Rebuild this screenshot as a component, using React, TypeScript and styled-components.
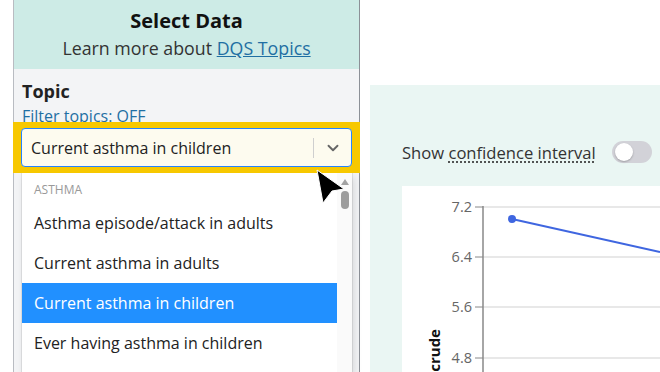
import styled, { createGlobalStyle } from "styled-components";
import { ChevronDown } from "lucide-react";

const GlobalStyle = createGlobalStyle`
    html, body {
        margin: 0;
        padding: 0;
        background: #ffffff;
        font-family: 'Open Sans', 'Noto Sans', sans-serif;
        color: #222;
    }
    * { box-sizing: border-box; }
`

const Page = styled.div`
    width: 660px;
    height: 372px;
    display: flex;
    overflow: hidden;
    position: relative;
`

const Sidebar = styled.div`
    width: 347px;
    margin-left: 13px;
    height: 100%;
    display: flex;
    flex-direction: column;
    border-left: 1px solid #b9bcc2;
    border-right: 1px solid #8c9097;
    background: #f3f4f6;
`

const Header = styled.div`
    flex-shrink: 0;
    background: #cdebe6;
    height: 69px;
    padding-top: 7px;
    text-align: center;

    .title {
        margin: 0;
        font-size: 20px;
        font-weight: 700;
        line-height: 28px;
        color: #111;
    }
    .sub {
        margin: 0;
        font-size: 17.8px;
        line-height: 26px;
        color: #333;
    }
    .sub a {
        color: #1f6fa3;
        text-decoration: underline;
    }
`

const Body = styled.div`
    flex: 1;
    min-height: 0;
    display: flex;
    flex-direction: column;
    padding-top: 9px;
`

const Label = styled.div`
    padding-left: 8px;
    font-size: 18px;
    font-weight: 700;
    line-height: 26px;
    color: #222;
`

const FilterLink = styled.div`
    padding-left: 8px;
    margin-top: 2px;
    font-size: 16px;
    line-height: 20px;
    color: #1f6fa3;
`

const Highlight = styled.div`
    flex-shrink: 0;
    position: relative;
    z-index: 1;
    margin: -4px -1px 0;
    padding: 6px 8px;
    background: #f7c800;
`

const Select = styled.div`
    height: 39px;
    display: flex;
    align-items: center;
    border: 1px solid #2684ff;
    border-radius: 4px;
    background: #fdfbef;

    .value {
        flex: 1;
        padding-left: 9px;
        font-size: 16px;
        color: #222;
    }
    .sep {
        width: 1px;
        height: 20px;
        background: #cfcfcf;
    }
    .arrow {
        width: 37px;
        display: flex;
        justify-content: center;
        color: #666;
    }
`

const Menu = styled.div`
    margin: 0 7px 0 8px;
    flex: 1;
    min-height: 0;
    overflow: hidden;
    display: flex;
    background: #ffffff;
    box-shadow: 0 0 0 1px rgba(0, 0, 0, 0.08), 2px 4px 8px rgba(0, 0, 0, 0.12);
`

const OptionList = styled.div`
    flex: 1;
    display: flex;
    flex-direction: column;
`

const GroupHeading = styled.div`
    padding: 8px 12px 4px;
    font-size: 12px;
    line-height: 18px;
    color: #999;
    text-transform: uppercase;
`

const Option = styled.div<{ $selected?: boolean }>`
    height: 40px;
    flex-shrink: 0;
    display: flex;
    align-items: center;
    padding: 0 12px;
    font-size: 16px;
    color: ${(p) => (p.$selected ? "#ffffff" : "#222")};
    background: ${(p) => (p.$selected ? "#2190ff" : "transparent")};
`

const Scrollbar = styled.div`
    width: 15px;
    background: #fafafa;
    display: flex;
    flex-direction: column;
    align-items: center;
    padding-top: 6px;

    .up {
        width: 0;
        height: 0;
        border-left: 4px solid transparent;
        border-right: 4px solid transparent;
        border-bottom: 6px solid #a3a3a3;
    }
    .thumb {
        margin-top: 6px;
        width: 8px;
        height: 18px;
        border-radius: 4px;
        background: #9d9d9d;
    }
`

const Main = styled.div`
    flex: 1;
    display: flex;
    flex-direction: column;
    padding: 85px 0 0 10px;
`

const Panel = styled.div`
    flex: 1;
    display: flex;
    flex-direction: column;
    background: #eaf6f3;
    padding: 56px 0 0 32px;
`

const ToggleRow = styled.div`
    display: flex;
    align-items: center;
    gap: 16px;
    height: 22px;
    font-size: 16.6px;
    color: #333;
    white-space: nowrap;

    .dotted {
        text-decoration: underline dotted #333;
        text-underline-offset: 3px;
    }
`

const Toggle = styled.div`
    width: 40px;
    height: 22px;
    flex-shrink: 0;
    border-radius: 11px;
    background: #d2d2d8;
    display: flex;
    align-items: center;
    padding: 0 3px;

    .knob {
        width: 18px;
        height: 18px;
        border-radius: 50%;
        background: #ffffff;
        box-shadow: 0 1px 2px rgba(0, 0, 0, 0.25);
    }
`

const ChartCard = styled.div`
    flex: 1;
    margin-top: 23px;
    background: #ffffff;
    overflow: hidden;
`

const Cursor = styled.svg`
    position: absolute;
    left: 316px;
    top: 169px;
    z-index: 5;
`

const ticks = [
    { label: "7.2", y: 21 },
    { label: "6.4", y: 71 },
    { label: "5.6", y: 121 },
    { label: "4.8", y: 172 },
];

const Chart = () => (
    <svg width="258" height="186" viewBox="0 0 258 186" fontFamily="'Open Sans', sans-serif">
        {ticks.map((t) => (
            <g key={t.label}>
                <line x1="81" x2="258" y1={t.y} y2={t.y} stroke="#e8e8e8" strokeWidth="2" />
                <line x1="73" x2="81" y1={t.y} y2={t.y} stroke="#888" strokeWidth="1" />
                <text x="70" y={t.y + 5} textAnchor="end" fontSize="14.5" fill="#666">{t.label}</text>
            </g>
        ))}
        <line x1="81" x2="81" y1="20" y2="186" stroke="#888" strokeWidth="1.5" />
        <polyline points="110,33 258,66" fill="none" stroke="#3f66e0" strokeWidth="2" />
        <circle cx="110" cy="33" r="4" fill="#3f66e0" />
        <text transform="translate(38 143) rotate(-90)" textAnchor="end" fontSize="15" fontWeight="700" fill="#111">crude</text>
    </svg>
);

const App = () => {
    return (
        <Page>
            <GlobalStyle />
            <Sidebar>
                <Header>
                    <h2 className="title">Select Data</h2>
                    <p className="sub">Learn more about <a>DQS Topics</a></p>
                </Header>
                <Body>
                    <Label>Topic</Label>
                    <FilterLink>Filter topics: OFF</FilterLink>
                    <Highlight>
                        <Select>
                            <span className="value">Current asthma in children</span>
                            <span className="sep" />
                            <span className="arrow"><ChevronDown size={18} strokeWidth={2.5} /></span>
                        </Select>
                    </Highlight>
                    <Menu>
                        <OptionList>
                            <GroupHeading>Asthma</GroupHeading>
                            <Option>Asthma episode/attack in adults</Option>
                            <Option>Current asthma in adults</Option>
                            <Option $selected>Current asthma in children</Option>
                            <Option>Ever having asthma in children</Option>
                        </OptionList>
                        <Scrollbar>
                            <span className="up" />
                            <span className="thumb" />
                        </Scrollbar>
                    </Menu>
                </Body>
            </Sidebar>
            <Main>
                <Panel>
                    <ToggleRow>
                        <span>Show <span className="dotted">confidence interval</span></span>
                        <Toggle><span className="knob" /></Toggle>
                    </ToggleRow>
                    <ChartCard>
                        <Chart />
                    </ChartCard>
                </Panel>
            </Main>
            <Cursor width="32" height="38" viewBox="0 0 32 38">
                <path d="M1 1 L28 20 L16 22 L7 34 Z" fill="#000" stroke="#fff" strokeWidth="1" strokeLinejoin="round" />
            </Cursor>
        </Page>
    );
};

export default App;
